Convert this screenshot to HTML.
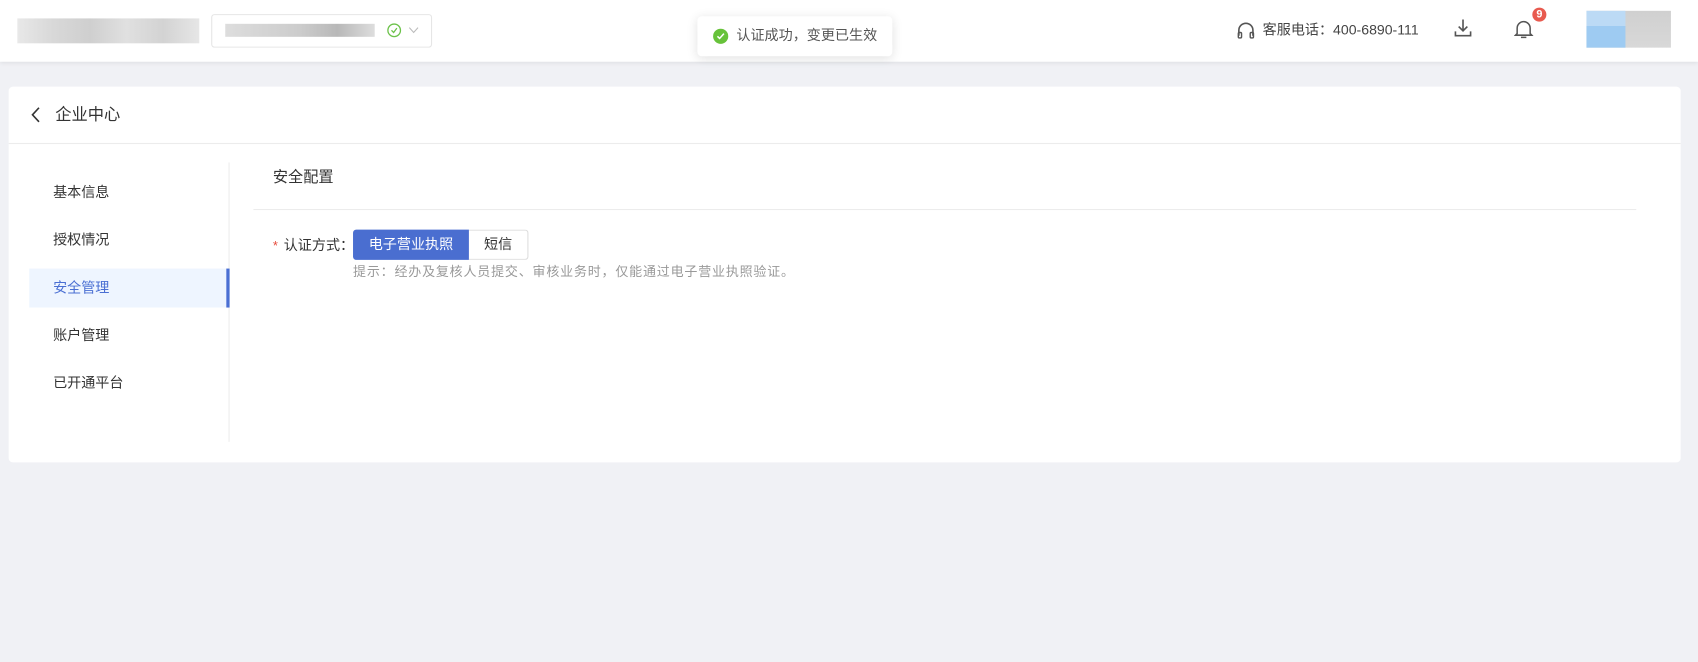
<!DOCTYPE html>
<html><head><meta charset="utf-8"><style>
*{margin:0;padding:0;box-sizing:border-box}
html,body{width:1698px;height:661px;overflow:hidden;background:#f0f1f5}
#s{position:absolute;left:0;top:0;width:1568px;height:611px;transform:scale(1.08291);transform-origin:0 0;font-family:"Liberation Sans","Noto Sans CJK SC",sans-serif;color:#333}
.a{position:absolute}
.hd{left:0;top:0;width:1568px;height:57px;background:#fff;box-shadow:0 1px 4px rgba(0,0,0,.08)}
.t{white-space:nowrap;line-height:1}
</style></head><body><div id="s">
<div class="a hd"></div>
<div class="a" style="left:16px;top:17px;width:168px;height:23px;background:linear-gradient(90deg,#e8e8e8 0,#d8d8d8 20%,#cfcfcf 40%,#e0e0e0 60%,#d3d3d3 80%,#e6e6e6 100%)"></div>
<div class="a" style="left:195px;top:13px;width:204px;height:31px;border:1px solid #e6e6e6;border-radius:3px;background:#fff"></div>
<div class="a" style="left:208px;top:22px;width:138px;height:12px;background:linear-gradient(90deg,#ddd,#ccc 50%,#b8b8b8 75%,#ddd)"></div>
<svg class="a" style="left:357px;top:21px" width="14" height="14" viewBox="0 0 14 14"><circle cx="7" cy="7" r="5.8" fill="none" stroke="#6cc24a" stroke-width="1.2"/><path d="M4.5 7l2 2 3-4" fill="none" stroke="#6cc24a" stroke-width="1.2"/></svg>
<svg class="a" style="left:377px;top:24px" width="10" height="8" viewBox="0 0 10 8"><path d="M1 1.5l4 4.5 4-4.5" fill="none" stroke="#bbb" stroke-width="1"/></svg>
<div class="a" style="left:644px;top:15px;width:180px;height:37px;background:#fff;border-radius:4px;box-shadow:0 2px 10px rgba(0,0,0,.12)"></div>
<svg class="a" style="left:658px;top:26px" width="15" height="15" viewBox="0 0 15 15"><circle cx="7.5" cy="7.5" r="7" fill="#67c23a"/><path d="M4.5 7.5l2 2 4-4.5" fill="none" stroke="#fff" stroke-width="1.4"/></svg>
<div class="a t" style="left:680px;top:26px;font-size:13px;color:#555">认证成功，变更已生效</div>
<svg class="a" style="left:1142px;top:19px" width="17" height="18" viewBox="0 0 17 18"><path d="M2 14V9a6.5 6.5 0 0 1 13 0v5" fill="none" stroke="#555" stroke-width="1.5"/><rect x="1.5" y="11" width="3" height="5" rx="1" fill="none" stroke="#555" stroke-width="1.3"/><rect x="12.5" y="11" width="3" height="5" rx="1" fill="none" stroke="#555" stroke-width="1.3"/></svg>
<div class="a t" style="left:1166px;top:21px;font-size:13px;color:#444">客服电话：400-6890-111</div>
<svg class="a" style="left:1342px;top:17px" width="18" height="18" viewBox="0 0 18 18"><path d="M9 1v10M5 7.5l4 4 4-4M2 12v4h14v-4" fill="none" stroke="#555" stroke-width="1.5"/></svg>
<svg class="a" style="left:1398px;top:17px" width="18" height="20" viewBox="0 0 18 20"><path d="M3 14V9a6 6 0 0 1 12 0v5l1.5 1.5h-15z M6.5 17.5h5" fill="none" stroke="#555" stroke-width="1.4"/></svg>
<div class="a" style="left:1415px;top:7px;width:13px;height:13px;border-radius:50%;background:#e85a4f;color:#fff;font-size:10px;line-height:13px;text-align:center;font-weight:bold">9</div>
<div class="a" style="left:1465px;top:10px;width:78px;height:34px;background:linear-gradient(#d0d0d0,#d8d8d8)"></div>
<div class="a" style="left:1465px;top:10px;width:36px;height:14px;background:#bcdaf5"></div>
<div class="a" style="left:1465px;top:24px;width:36px;height:20px;background:#9ecbf2"></div>
<div class="a" style="left:8px;top:80px;width:1544px;height:347px;background:#fff;border-radius:4px"></div>
<svg class="a" style="left:28px;top:98px" width="10" height="16" viewBox="0 0 10 16"><path d="M8 1.5L2 8l6 6.5" fill="none" stroke="#333" stroke-width="1.5"/></svg>
<div class="a t" style="left:51px;top:99px;font-size:15px;color:#333">企业中心</div>
<div class="a" style="left:8px;top:132px;width:1544px;height:1px;background:#ececec"></div>
<div class="a" style="left:211px;top:150px;width:1px;height:258px;background:#ececec"></div>
<div class="a" style="left:27px;top:248px;width:185px;height:36px;background:#eef5ff;border-right:3px solid #4a6fd3"></div>
<div class="a t" style="left:49px;top:171px;font-size:13px">基本信息</div>
<div class="a t" style="left:49px;top:215px;font-size:13px">授权情况</div>
<div class="a t" style="left:49px;top:259px;font-size:13px;color:#4a6fd3">安全管理</div>
<div class="a t" style="left:49px;top:303px;font-size:13px">账户管理</div>
<div class="a t" style="left:49px;top:347px;font-size:13px">已开通平台</div>
<div class="a t" style="left:252px;top:156px;font-size:14px">安全配置</div>
<div class="a" style="left:234px;top:193px;width:1277px;height:1px;background:#ececec"></div>
<div class="a t" style="left:252px;top:221px;font-size:12px;color:#e74c3c">*</div>
<div class="a t" style="left:262px;top:220px;font-size:13px">认证方式：</div>
<div class="a t" style="left:326px;top:212px;width:107px;height:28px;background:#4a6ed0;color:#fff;font-size:13px;line-height:28px;text-align:center;border-radius:3px 0 0 3px">电子营业执照</div>
<div class="a t" style="left:433px;top:212px;width:55px;height:28px;border:1px solid #dcdcdc;border-left:none;color:#333;font-size:13px;line-height:26px;text-align:center;border-radius:0 3px 3px 0">短信</div>
<div class="a t" style="left:326px;top:245px;font-size:12px;color:#999;letter-spacing:0.75px">提示：经办及复核人员提交、审核业务时，仅能通过电子营业执照验证。</div>
</div></body></html>
